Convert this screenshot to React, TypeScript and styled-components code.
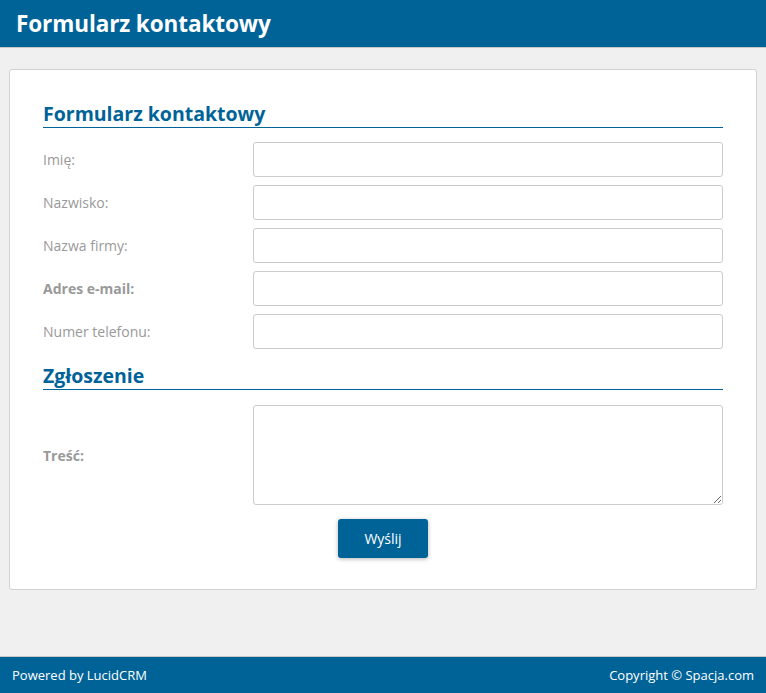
import React from "react";
import styled, { createGlobalStyle } from "styled-components";

const Global = createGlobalStyle`
  html, body { margin: 0; padding: 0; }
  body {
    background: #f0f0f0;
    font-family: "Open Sans", "Liberation Sans", sans-serif;
  }
  * { box-sizing: border-box; }
`;

const Page = styled.div`
  min-height: 100vh;
  display: flex;
  flex-direction: column;
`;

const TopBar = styled.header`
  height: 48px;
  background: #006398;
  border-bottom: 1px solid #c8c8c8;
  display: flex;
  align-items: center;
  padding: 0 16px 1px;
`;

const TopTitle = styled.h1`
  margin: 0;
  color: #fff;
  font-size: 22.5px;
  font-weight: 700;
  letter-spacing: -0.1px;
`;

const Main = styled.main`
  flex: 1;
  padding: 21px 9px;
`;

const Card = styled.section`
  background: #fff;
  border: 1px solid #d2d2d2;
  border-radius: 3px;
  padding: 30px 33px 31px;
`;

const SectionTitle = styled.h2<{ $mt?: number }>`
  margin: ${(p) => p.$mt ?? 0}px 0 0;
  color: #006398;
  font-size: 19.5px;
  font-weight: 700;
  line-height: 27px;
  padding-bottom: 0;
  border-bottom: 1px solid #006398;
`;

const Rows = styled.div<{ $mt: number }>`
  margin-top: ${(p) => p.$mt}px;
  display: flex;
  flex-direction: column;
  gap: 8px;
`;

const Row = styled.div`
  display: grid;
  grid-template-columns: 210px 1fr;
  align-items: center;
`;

const Label = styled.label<{ $bold?: boolean }>`
  color: #999;
  font-size: 14px;
  font-weight: ${(p) => (p.$bold ? 700 : 400)};
`;

const Input = styled.input`
  height: 35px;
  width: 100%;
  border: 1px solid #cccccc;
  border-radius: 3px;
  background: #fff;
  font-family: inherit;
  font-size: 14px;
  padding: 0 8px;
  outline: none;
`;

const TextArea = styled.textarea`
  height: 100px;
  width: 100%;
  border: 1px solid #cccccc;
  border-radius: 3px;
  background: #fff;
  font-family: inherit;
  font-size: 14px;
  padding: 6px 8px;
  outline: none;
  display: block;
`;

const Actions = styled.div`
  margin-top: 14px;
  display: flex;
  justify-content: center;
`;

const Button = styled.button`
  width: 90px;
  height: 39px;
  background: #006398;
  color: #fff;
  border: none;
  border-radius: 3px;
  font-family: inherit;
  font-size: 14px;
  box-shadow: 0 1px 4px rgba(0, 0, 0, 0.3);
  cursor: pointer;
`;

const Footer = styled.footer`
  height: 37px;
  background: #006398;
  border-top: 1px solid #c8c8c8;
  display: flex;
  align-items: center;
  justify-content: space-between;
  padding: 0 12px;
  color: #fff;
  font-size: 13px;
`;

const fields: { label: string; bold?: boolean; type?: string }[] = [
  { label: "Imię:" },
  { label: "Nazwisko:" },
  { label: "Nazwa firmy:" },
  { label: "Adres e-mail:", bold: true, type: "email" },
  { label: "Numer telefonu:" },
];

export default function App() {
  return (
    <Page>
      <Global />
      <TopBar>
        <TopTitle>Formularz kontaktowy</TopTitle>
      </TopBar>
      <Main>
        <Card>
          <SectionTitle>Formularz kontaktowy</SectionTitle>
          <Rows $mt={14}>
            {fields.map((f) => (
              <Row key={f.label}>
                <Label $bold={f.bold}>{f.label}</Label>
                <Input type={f.type ?? "text"} />
              </Row>
            ))}
          </Rows>
          <SectionTitle $mt={13}>Zgłoszenie</SectionTitle>
          <Rows $mt={15}>
            <Row>
              <Label $bold>Treść:</Label>
              <TextArea />
            </Row>
          </Rows>
          <Actions>
            <Button type="button">Wyślij</Button>
          </Actions>
        </Card>
      </Main>
      <Footer>
        <span>Powered by LucidCRM</span>
        <span>Copyright © Spacja.com</span>
      </Footer>
    </Page>
  );
}
